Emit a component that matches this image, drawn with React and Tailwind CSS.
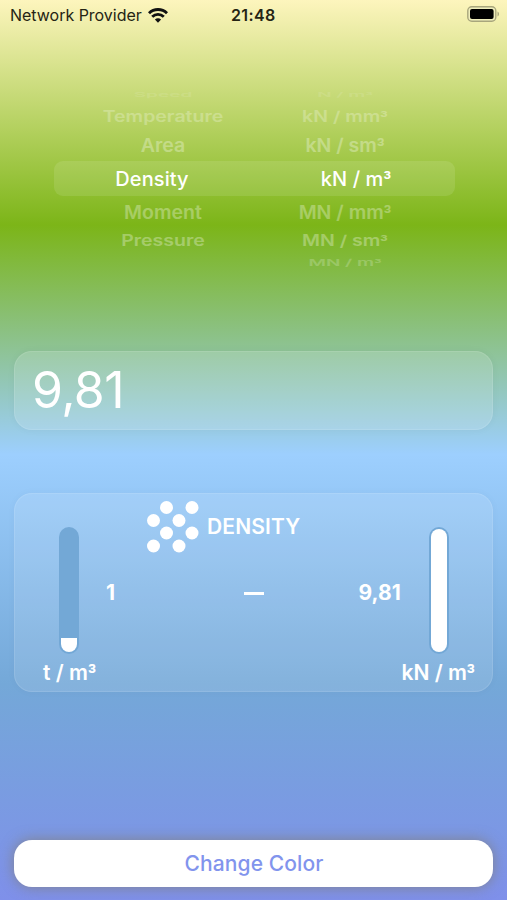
const pickerRows = [
  { left: 'Speed', right: 'N / m³', row: 'h-4', text: 'scale-y-[0.35] opacity-10 text-[19px]' },
  { left: 'Temperature', right: 'kN / mm³', row: 'h-7', text: 'scale-y-[0.78] opacity-25 text-[19.5px]' },
  { left: 'Area', right: 'kN / sm³', row: 'h-[30px]', text: 'scale-y-[0.95] opacity-30 text-[19.5px]' },
  { left: 'Density', right: 'kN / m³', row: 'h-9', text: 'text-[20px] tracking-[0.1px]', selected: true },
  { left: 'Moment', right: 'MN / mm³', row: 'h-[30px] pt-px', text: 'scale-y-[0.95] opacity-30 text-[19.5px]' },
  { left: 'Pressure', right: 'MN / sm³', row: 'h-7', text: 'scale-y-[0.78] opacity-30 text-[19.5px]' },
  { left: '', right: 'MN / m³', row: 'h-4', text: 'scale-y-[0.5] opacity-20 text-[19px]' },
];

const dots = [
  [19.5, 6.5], [45, 6.5],
  [6.5, 19.5], [32, 19.5],
  [19.5, 32], [45, 32],
  [6.5, 45], [32, 45],
];

function StatusBar() {
  return (
    <header className="relative flex h-[30px] items-center pl-[10px] text-[#252414]">
      <span className="w-[132px] whitespace-nowrap text-[16px] leading-[30px] tracking-[-0.02px]">Network Provider</span>
      <svg className="ml-[6px] h-[15px] w-5" viewBox="0 0 20 15" fill="none" stroke="#111" strokeWidth="2.9">
        <path d="M1 5.2C6 .3 14 .3 19 5.2" />
        <path d="M4.2 8.8C7.6 5.6 12.4 5.6 15.8 8.8" />
        <path d="M10 14.7L6.9 11.6C8.7 9.9 11.3 9.9 13.1 11.6Z" fill="#111" stroke="none" />
      </svg>
      <span className="absolute left-[231px] text-[16px] font-semibold tracking-[0.4px]">21:48</span>
      <svg className="absolute left-[467px] top-[6px] h-4 w-[33px]" viewBox="0 0 33 16">
        <rect x="0.8" y="0.8" width="28" height="14.4" rx="4" fill="#efeebc" stroke="#a8a67c" strokeWidth="1.4" />
        <rect x="3" y="3" width="23.6" height="10" rx="2" fill="#000" />
        <path d="M30.5 5.5c2 .7 2 4.3 0 5z" fill="#a8a67c" />
      </svg>
    </header>
  );
}

// Inter draws a flat-topped cube sign, so the round one comes from Roboto
function Unit({ children }) {
  const [base, rest] = children.split('³');
  return (
    <>
      {base}
      {rest !== undefined && <span className="font-['Roboto',sans-serif] text-[1.05em] leading-none">³</span>}
    </>
  );
}

function PickerRow({ left, right, row, text, selected }) {
  const weight = selected ? 'font-medium' : 'font-semibold';
  return (
    <div className={`flex items-center justify-center whitespace-nowrap text-white ${weight} ${row}`}>
      <div className={`flex w-[182px] justify-center pl-[1px] ${selected ? '-translate-x-[11px]' : ''}`}>
        <span className={text}>{left}</span>
      </div>
      <div className={`flex w-[182px] justify-center pl-[1px] ${selected ? 'translate-x-[11px]' : ''}`}>
        <span className={text}>
          <Unit>{right}</Unit>
        </span>
      </div>
    </div>
  );
}

function UnitPicker() {
  return (
    <section className="relative mt-[57px] h-[184px]">
      <div className="absolute left-[54px] top-[74px] h-[35px] w-[401px] rounded-[9px] bg-white/10" />
      {pickerRows.map((item) => (
        <PickerRow key={item.right} {...item} />
      ))}
    </section>
  );
}

function Gauge({ full }) {
  return (
    <div className="flex h-[127px] w-5 items-end rounded-full bg-[#73a8d6] p-[2px]">
      <div className={full ? 'h-full w-4 rounded-full bg-white' : 'h-[14px] w-4 rounded-b-full bg-white'} />
    </div>
  );
}

function ResultCard() {
  return (
    <section className="relative mx-[14px] mt-[62px] h-[199px] rounded-[18px] border border-white/10 bg-white/12 font-semibold text-white shadow-[0_0_8px_rgba(0,0,0,0.03)]">
      <div className="flex h-[66px] items-center pl-[132px]">
        <svg className="h-[52px] w-[52px]" viewBox="0 0 52 52" fill="#fff">
          {dots.map(([x, y]) => (
            <circle key={`${x}-${y}`} cx={x} cy={y} r="6.5" />
          ))}
        </svg>
        <span className="ml-[8px] text-[21px] tracking-[0.15px]">DENSITY</span>
      </div>
      <div className="-mt-[33px] flex h-[127px] items-center pl-[44px]">
        <Gauge />
        <span className="ml-[27px] w-[138px] pt-[4px] text-[21px] font-bold">1</span>
        <div className="mt-[5px] h-[3px] w-5 bg-white" />
        <span className="w-[137px] pt-[4px] text-right text-[21px] font-bold tracking-[0.1px]">9,81</span>
        <div className="ml-[28px]">
          <Gauge full />
        </div>
      </div>
      <div className="mt-[2px] flex justify-between pl-[28px] pr-[17px] text-[21px] leading-[34px]">
        <span><Unit>t / m³</Unit></span>
        <span><Unit>kN / m³</Unit></span>
      </div>
    </section>
  );
}

export default function App() {
  return (
    <main className="h-[900px] w-[507px] overflow-hidden bg-[linear-gradient(180deg,#fdf5bd_0%,#7cb518_25%,#9dcffe_50.500%,#74a8d8_76%,#7f90ea_100%)] font-['Inter',sans-serif]">
      <StatusBar />
      <UnitPicker />
      <section className="mx-[14px] mt-[80px] flex h-[79px] items-center rounded-[18px] border border-white/10 bg-white/15 pl-[17px] text-[50px] tracking-[-0.6px] text-white shadow-[0_0_8px_rgba(0,0,0,0.04)]">
        9,81
      </section>
      <div className="h-px" />
      <ResultCard />
      <button className="mx-[14px] mt-[148px] flex h-[47px] w-[479px] items-center justify-center rounded-[18px] bg-white pl-[1px] text-[21px] font-medium tracking-[0.1px] text-[#8294ed] shadow-[0_0_14px_rgba(128,128,128,0.9)]">
        Change Color
      </button>
    </main>
  );
}
